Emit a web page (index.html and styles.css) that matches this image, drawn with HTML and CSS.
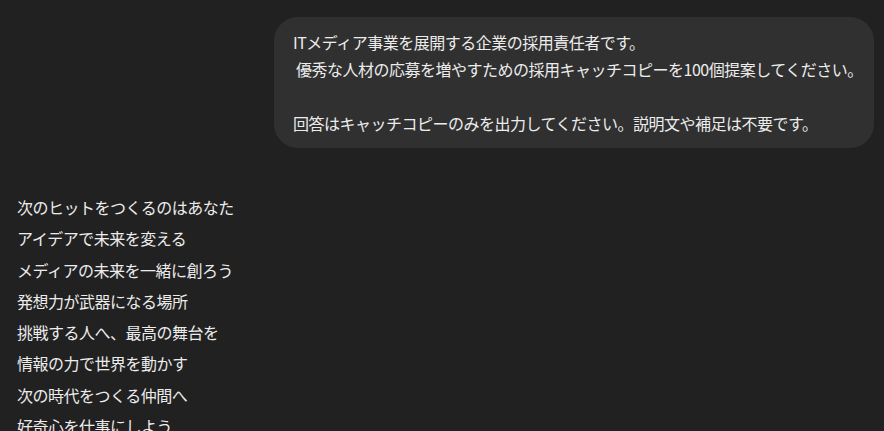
FILE: index.html
```html
<!DOCTYPE html>
<html lang="ja">
<head>
<meta charset="utf-8">
<link rel="stylesheet" href="styles.css">
</head>
<body>
<main class="chat">
  <div class="user-row">
    <div class="bubble">ITメディア事業を展開する企業の採用責任者です。<br>&nbsp;優秀な人材の応募を増やすための採用キャッチコピーを100個提案してください。<br><br>回答はキャッチコピーのみを出力してください。説明文や補足は不要です。</div>
  </div>
  <div class="answer">
    <p>次のヒットをつくるのはあなた</p>
    <p>アイデアで未来を変える</p>
    <p>メディアの未来を一緒に創ろう</p>
    <p>発想力が武器になる場所</p>
    <p>挑戦する人へ、最高の舞台を</p>
    <p>情報の力で世界を動かす</p>
    <p>次の時代をつくる仲間へ</p>
    <p>好奇心を仕事にしよう</p>
  </div>
</main>
</body>
</html>
```
FILE: styles.css
```css
html, body {
  margin: 0;
  padding: 0;
  background: #212121;
  height: 100%;
  overflow: hidden;
}
body {
  font-family: "Noto Sans CJK JP", "Noto Sans", sans-serif;
  font-size: 16px;
  color: #ececec;
  letter-spacing: -0.5px;
}
.chat {
  padding: 17px 10px 0 17px;
  display: flex;
  flex-direction: column;
}
.user-row {
  display: flex;
  justify-content: flex-end;
}
.bubble {
  background: #303030;
  border-radius: 24px;
  padding: 12px 20px 11px 19px;
  width: 561px;
  line-height: 27px;
  white-space: nowrap;
}
.answer {
  margin-top: 44px;
}
.answer p {
  margin: 0;
  line-height: 31.3px;
}
```
